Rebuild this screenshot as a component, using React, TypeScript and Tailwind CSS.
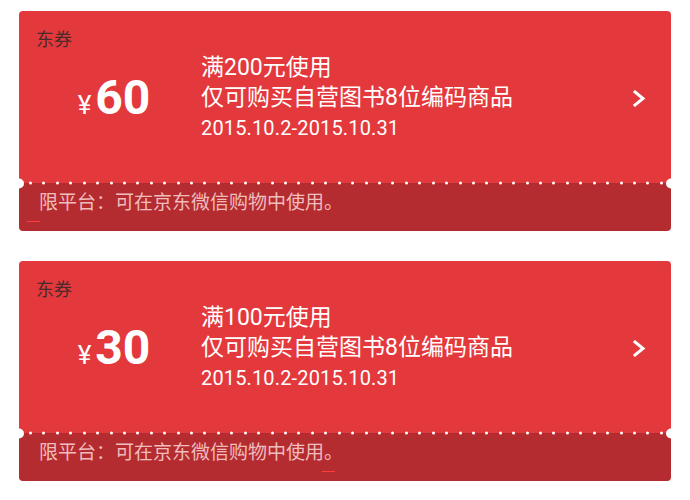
type Coupon = {
  amount: number;
  limit: string;
  scope: string;
  period: string;
  platform: string;
};

const coupons: Coupon[] = [
  {
    amount: 60,
    limit: "满200元使用",
    scope: "仅可购买自营图书8位编码商品",
    period: "2015.10.2-2015.10.31",
    platform: "限平台：可在京东微信购物中使用。",
  },
  {
    amount: 30,
    limit: "满100元使用",
    scope: "仅可购买自营图书8位编码商品",
    period: "2015.10.2-2015.10.31",
    platform: "限平台：可在京东微信购物中使用。",
  },
];

// perforation between the coupon body and its footer
const Perforation = () => (
  <div className="pointer-events-none absolute left-0 right-0 top-0 -translate-y-1/2">
    <div className="flex justify-between pl-[10px] pr-[8px]">
      {Array.from({ length: 48 }).map((_, i) => (
        <span key={i} className="h-[3px] w-[3px] rounded-full bg-white" />
      ))}
    </div>
    <span className="absolute left-[-5px] top-1/2 h-[10px] w-[10px] -translate-y-1/2 rounded-full bg-white" />
    <span className="absolute right-[-5px] top-1/2 h-[10px] w-[10px] -translate-y-1/2 rounded-full bg-white" />
  </div>
);

const Chevron = () => (
  <svg width="13" height="17" viewBox="0 0 13 17" className="mr-[25px]">
    <polyline points="2,2 10,8.5 2,15" fill="none" stroke="white" strokeWidth="3" strokeLinecap="square" />
  </svg>
);

const CouponCard = ({ coupon, mark }: { coupon: Coupon; mark: string }) => {
  return (
    <div className="overflow-hidden rounded-[4px]">
      <div className="h-[172px] bg-[#e4393c] pl-[17px] pt-[17px]">
        <div className="text-[18px] leading-[24px] text-[#4a2b2c]">东券</div>
        <div className="mt-[1px] flex items-center">
          <div className="flex w-[156px] items-baseline justify-center text-white">
            <span className="mr-[4px] text-[26px] leading-none">¥</span>
            <span className="text-[48px] font-bold leading-none">{coupon.amount}</span>
          </div>
          <div className="ml-[9px] flex-1 text-white">
            <div className="text-[23px] leading-[30px]">{coupon.limit}</div>
            <div className="text-[23px] leading-[30px]">{coupon.scope}</div>
            <div className="text-[20px] leading-[30px] tracking-[0.15px]">{coupon.period}</div>
          </div>
          <Chevron />
        </div>
      </div>
      <div className="relative h-[48px] bg-[#b42c30] pl-[20px] pt-[7px]">
        <Perforation />
        <div className="text-[19px] leading-[26px] text-[#f1bcbd]">{coupon.platform}</div>
        <span className={`absolute top-[38px] h-[1px] w-[13px] bg-[#ff3b3b] ${mark}`} />
      </div>
    </div>
  );
};

export default function App() {
  return (
    <div
      className="flex h-[500px] w-[690px] flex-col gap-[30px] bg-white px-[19px] pt-[11px]"
      style={{ fontFamily: 'Roboto, "Noto Sans CJK SC", sans-serif' }}
    >
      <CouponCard coupon={coupons[0]} mark="left-[8px]" />
      <CouponCard coupon={coupons[1]} mark="left-[303px]" />
    </div>
  );
}
